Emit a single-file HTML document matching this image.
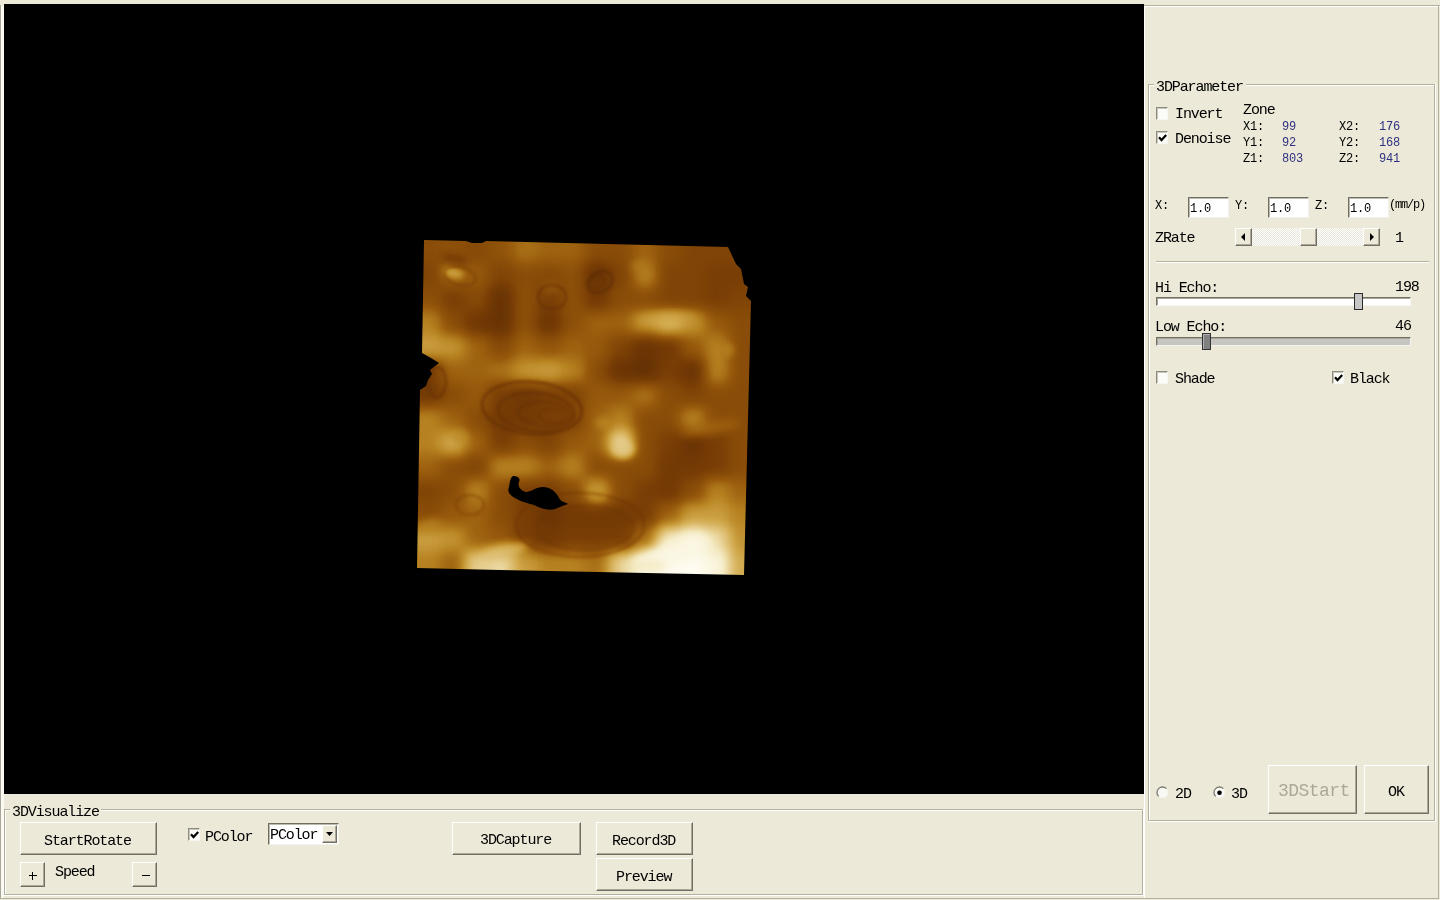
<!DOCTYPE html>
<html><head><meta charset="utf-8">
<style>
html,body{margin:0;padding:0;width:1440px;height:900px;overflow:hidden;background:#ece9d8;}
*{box-sizing:border-box;}
.a{position:absolute;}
.t{position:absolute;font-family:"Liberation Mono",monospace;font-size:15px;line-height:15px;letter-spacing:-1.1px;color:#000;white-space:pre;will-change:transform;}
.s{position:absolute;font-family:"Liberation Mono",monospace;font-size:12px;line-height:12px;letter-spacing:-0.2px;color:#000;white-space:pre;will-change:transform;}
.blue{color:#2e3080;}
.hl{position:absolute;height:1px;background:#b3b09c;}
.hw{position:absolute;height:1px;background:#fff;}
.vl{position:absolute;width:1px;background:#b3b09c;}
.vw{position:absolute;width:1px;background:#fff;}
.btn{position:absolute;background:#ece9d8;border-top:1px solid #fff;border-left:1px solid #fff;border-right:1px solid #716f64;border-bottom:1px solid #716f64;box-shadow:inset -1px -1px 0 #aca899;}
.cb{position:absolute;width:12px;height:13px;background:#fbfbf8;border-top:1px solid #8d8b80;border-left:1px solid #8d8b80;border-right:1px solid #f6f5ef;border-bottom:1px solid #f6f5ef;box-shadow:inset 1px 1px 0 #c9c7bb;}
.edit{position:absolute;background:#fff;border-top:1px solid #6f6e60;border-left:1px solid #6f6e60;border-right:1px solid #f3f2ea;border-bottom:1px solid #f3f2ea;box-shadow:inset 1px 1px 0 #bdbbad;}
</style></head><body>
<!-- window frame -->
<div class="vl" style="left:0;top:5px;height:894px;background:#a9a797"></div>
<div class="a" style="left:1px;top:6px;width:3px;height:892px;background:#fafaf2"></div>
<!-- black viewport -->
<div class="a" style="left:4px;top:4px;width:1140px;height:790px;background:#000"></div>
<div id="us" class="a" style="left:0;top:0;width:1440px;height:900px;"><svg class="a" style="left:0;top:0" width="1440" height="900" viewBox="0 0 1440 900">
<defs><clipPath id="cp"><polygon points="424,240 466,241 472,243 482,243 486,241 728,247 736,264 741,269 744,284 748,287 746,296 751,301 744,575 500,570 417,568 420,390 426,386 428,380 432,374 430,370 439,363 431,358 422,353"/></clipPath>
<filter id="cm" x="0" y="0" width="1" height="1" color-interpolation-filters="sRGB"><feComponentTransfer><feFuncR type="table" tableValues="0.118 0.196 0.294 0.384 0.486 0.596 0.722 0.824 0.894 0.957 1.000"/><feFuncG type="table" tableValues="0.039 0.078 0.137 0.184 0.251 0.353 0.518 0.667 0.792 0.918 0.992"/><feFuncB type="table" tableValues="0.000 0.000 0.008 0.016 0.024 0.047 0.133 0.306 0.529 0.765 0.949"/></feComponentTransfer></filter>
<filter id="gb" x="-10%" y="-10%" width="120%" height="120%" color-interpolation-filters="sRGB"><feGaussianBlur stdDeviation="7"/></filter>
<filter id="f3" x="-50%" y="-50%" width="200%" height="200%" color-interpolation-filters="sRGB"><feGaussianBlur stdDeviation="3"/></filter>
<filter id="f4" x="-50%" y="-50%" width="200%" height="200%" color-interpolation-filters="sRGB"><feGaussianBlur stdDeviation="4"/></filter>
<filter id="f6" x="-50%" y="-50%" width="200%" height="200%" color-interpolation-filters="sRGB"><feGaussianBlur stdDeviation="6"/></filter>
<filter id="fr" x="-20%" y="-20%" width="140%" height="140%" color-interpolation-filters="sRGB"><feGaussianBlur stdDeviation="1.4"/></filter>
</defs>
<g clip-path="url(#cp)"><g filter="url(#cm)">
<rect x="400" y="225" width="370" height="370" fill="#737373"/>
<g filter="url(#gb)">
<rect x="393" y="215" width="25" height="25" fill="#737373"/>
<rect x="417" y="215" width="25" height="25" fill="#737373"/>
<rect x="441" y="215" width="25" height="25" fill="#767676"/>
<rect x="465" y="215" width="25" height="25" fill="#707070"/>
<rect x="489" y="215" width="25" height="25" fill="#7a7a7a"/>
<rect x="513" y="215" width="25" height="25" fill="#8d8d8d"/>
<rect x="537" y="215" width="25" height="25" fill="#858585"/>
<rect x="561" y="215" width="25" height="25" fill="#858585"/>
<rect x="585" y="215" width="25" height="25" fill="#737373"/>
<rect x="609" y="215" width="25" height="25" fill="#737373"/>
<rect x="633" y="215" width="25" height="25" fill="#858585"/>
<rect x="657" y="215" width="25" height="25" fill="#737373"/>
<rect x="681" y="215" width="25" height="25" fill="#6a6a6a"/>
<rect x="705" y="215" width="25" height="25" fill="#6a6a6a"/>
<rect x="729" y="215" width="25" height="25" fill="#6a6a6a"/>
<rect x="753" y="215" width="25" height="25" fill="#6a6a6a"/>
<rect x="393" y="239" width="25" height="25" fill="#737373"/>
<rect x="417" y="239" width="25" height="25" fill="#737373"/>
<rect x="441" y="239" width="25" height="25" fill="#767676"/>
<rect x="465" y="239" width="25" height="25" fill="#707070"/>
<rect x="489" y="239" width="25" height="25" fill="#7a7a7a"/>
<rect x="513" y="239" width="25" height="25" fill="#8d8d8d"/>
<rect x="537" y="239" width="25" height="25" fill="#858585"/>
<rect x="561" y="239" width="25" height="25" fill="#858585"/>
<rect x="585" y="239" width="25" height="25" fill="#737373"/>
<rect x="609" y="239" width="25" height="25" fill="#737373"/>
<rect x="633" y="239" width="25" height="25" fill="#858585"/>
<rect x="657" y="239" width="25" height="25" fill="#737373"/>
<rect x="681" y="239" width="25" height="25" fill="#6a6a6a"/>
<rect x="705" y="239" width="25" height="25" fill="#6a6a6a"/>
<rect x="729" y="239" width="25" height="25" fill="#6a6a6a"/>
<rect x="753" y="239" width="25" height="25" fill="#6a6a6a"/>
<rect x="393" y="263" width="25" height="25" fill="#6a6a6a"/>
<rect x="417" y="263" width="25" height="25" fill="#6a6a6a"/>
<rect x="441" y="263" width="25" height="25" fill="#858585"/>
<rect x="465" y="263" width="25" height="25" fill="#7e7e7e"/>
<rect x="489" y="263" width="25" height="25" fill="#6a6a6a"/>
<rect x="513" y="263" width="25" height="25" fill="#737373"/>
<rect x="537" y="263" width="25" height="25" fill="#707070"/>
<rect x="561" y="263" width="25" height="25" fill="#767676"/>
<rect x="585" y="263" width="25" height="25" fill="#555555"/>
<rect x="609" y="263" width="25" height="25" fill="#6a6a6a"/>
<rect x="633" y="263" width="25" height="25" fill="#989898"/>
<rect x="657" y="263" width="25" height="25" fill="#6a6a6a"/>
<rect x="681" y="263" width="25" height="25" fill="#6a6a6a"/>
<rect x="705" y="263" width="25" height="25" fill="#646464"/>
<rect x="729" y="263" width="25" height="25" fill="#646464"/>
<rect x="753" y="263" width="25" height="25" fill="#646464"/>
<rect x="393" y="287" width="25" height="25" fill="#767676"/>
<rect x="417" y="287" width="25" height="25" fill="#767676"/>
<rect x="441" y="287" width="25" height="25" fill="#646464"/>
<rect x="465" y="287" width="25" height="25" fill="#707070"/>
<rect x="489" y="287" width="25" height="25" fill="#525252"/>
<rect x="513" y="287" width="25" height="25" fill="#767676"/>
<rect x="537" y="287" width="25" height="25" fill="#646464"/>
<rect x="561" y="287" width="25" height="25" fill="#767676"/>
<rect x="585" y="287" width="25" height="25" fill="#5e5e5e"/>
<rect x="609" y="287" width="25" height="25" fill="#737373"/>
<rect x="633" y="287" width="25" height="25" fill="#737373"/>
<rect x="657" y="287" width="25" height="25" fill="#6a6a6a"/>
<rect x="681" y="287" width="25" height="25" fill="#6a6a6a"/>
<rect x="705" y="287" width="25" height="25" fill="#646464"/>
<rect x="729" y="287" width="25" height="25" fill="#6a6a6a"/>
<rect x="753" y="287" width="25" height="25" fill="#6a6a6a"/>
<rect x="393" y="311" width="25" height="25" fill="#989898"/>
<rect x="417" y="311" width="25" height="25" fill="#989898"/>
<rect x="441" y="311" width="25" height="25" fill="#737373"/>
<rect x="465" y="311" width="25" height="25" fill="#5b5b5b"/>
<rect x="489" y="311" width="25" height="25" fill="#525252"/>
<rect x="513" y="311" width="25" height="25" fill="#767676"/>
<rect x="537" y="311" width="25" height="25" fill="#585858"/>
<rect x="561" y="311" width="25" height="25" fill="#767676"/>
<rect x="585" y="311" width="25" height="25" fill="#858585"/>
<rect x="609" y="311" width="25" height="25" fill="#858585"/>
<rect x="633" y="311" width="25" height="25" fill="#a3a3a3"/>
<rect x="657" y="311" width="25" height="25" fill="#bdbdbd"/>
<rect x="681" y="311" width="25" height="25" fill="#a3a3a3"/>
<rect x="705" y="311" width="25" height="25" fill="#7e7e7e"/>
<rect x="729" y="311" width="25" height="25" fill="#737373"/>
<rect x="753" y="311" width="25" height="25" fill="#737373"/>
<rect x="393" y="335" width="25" height="25" fill="#aaaaaa"/>
<rect x="417" y="335" width="25" height="25" fill="#aaaaaa"/>
<rect x="441" y="335" width="25" height="25" fill="#a3a3a3"/>
<rect x="465" y="335" width="25" height="25" fill="#858585"/>
<rect x="489" y="335" width="25" height="25" fill="#707070"/>
<rect x="513" y="335" width="25" height="25" fill="#858585"/>
<rect x="537" y="335" width="25" height="25" fill="#7a7a7a"/>
<rect x="561" y="335" width="25" height="25" fill="#858585"/>
<rect x="585" y="335" width="25" height="25" fill="#7e7e7e"/>
<rect x="609" y="335" width="25" height="25" fill="#6a6a6a"/>
<rect x="633" y="335" width="25" height="25" fill="#555555"/>
<rect x="657" y="335" width="25" height="25" fill="#5e5e5e"/>
<rect x="681" y="335" width="25" height="25" fill="#7e7e7e"/>
<rect x="705" y="335" width="25" height="25" fill="#989898"/>
<rect x="729" y="335" width="25" height="25" fill="#737373"/>
<rect x="753" y="335" width="25" height="25" fill="#737373"/>
<rect x="393" y="359" width="25" height="25" fill="#646464"/>
<rect x="417" y="359" width="25" height="25" fill="#646464"/>
<rect x="441" y="359" width="25" height="25" fill="#858585"/>
<rect x="465" y="359" width="25" height="25" fill="#858585"/>
<rect x="489" y="359" width="25" height="25" fill="#8d8d8d"/>
<rect x="513" y="359" width="25" height="25" fill="#a3a3a3"/>
<rect x="537" y="359" width="25" height="25" fill="#aaaaaa"/>
<rect x="561" y="359" width="25" height="25" fill="#989898"/>
<rect x="585" y="359" width="25" height="25" fill="#737373"/>
<rect x="609" y="359" width="25" height="25" fill="#555555"/>
<rect x="633" y="359" width="25" height="25" fill="#505050"/>
<rect x="657" y="359" width="25" height="25" fill="#646464"/>
<rect x="681" y="359" width="25" height="25" fill="#555555"/>
<rect x="705" y="359" width="25" height="25" fill="#989898"/>
<rect x="729" y="359" width="25" height="25" fill="#737373"/>
<rect x="753" y="359" width="25" height="25" fill="#737373"/>
<rect x="393" y="383" width="25" height="25" fill="#5e5e5e"/>
<rect x="417" y="383" width="25" height="25" fill="#5e5e5e"/>
<rect x="441" y="383" width="25" height="25" fill="#737373"/>
<rect x="465" y="383" width="25" height="25" fill="#7e7e7e"/>
<rect x="489" y="383" width="25" height="25" fill="#646464"/>
<rect x="513" y="383" width="25" height="25" fill="#5b5b5b"/>
<rect x="537" y="383" width="25" height="25" fill="#646464"/>
<rect x="561" y="383" width="25" height="25" fill="#6a6a6a"/>
<rect x="585" y="383" width="25" height="25" fill="#7e7e7e"/>
<rect x="609" y="383" width="25" height="25" fill="#7e7e7e"/>
<rect x="633" y="383" width="25" height="25" fill="#8d8d8d"/>
<rect x="657" y="383" width="25" height="25" fill="#737373"/>
<rect x="681" y="383" width="25" height="25" fill="#6a6a6a"/>
<rect x="705" y="383" width="25" height="25" fill="#737373"/>
<rect x="729" y="383" width="25" height="25" fill="#737373"/>
<rect x="753" y="383" width="25" height="25" fill="#737373"/>
<rect x="393" y="407" width="25" height="25" fill="#989898"/>
<rect x="417" y="407" width="25" height="25" fill="#989898"/>
<rect x="441" y="407" width="25" height="25" fill="#858585"/>
<rect x="465" y="407" width="25" height="25" fill="#737373"/>
<rect x="489" y="407" width="25" height="25" fill="#5e5e5e"/>
<rect x="513" y="407" width="25" height="25" fill="#5e5e5e"/>
<rect x="537" y="407" width="25" height="25" fill="#646464"/>
<rect x="561" y="407" width="25" height="25" fill="#6a6a6a"/>
<rect x="585" y="407" width="25" height="25" fill="#858585"/>
<rect x="609" y="407" width="25" height="25" fill="#989898"/>
<rect x="633" y="407" width="25" height="25" fill="#737373"/>
<rect x="657" y="407" width="25" height="25" fill="#737373"/>
<rect x="681" y="407" width="25" height="25" fill="#989898"/>
<rect x="705" y="407" width="25" height="25" fill="#737373"/>
<rect x="729" y="407" width="25" height="25" fill="#737373"/>
<rect x="753" y="407" width="25" height="25" fill="#737373"/>
<rect x="393" y="431" width="25" height="25" fill="#989898"/>
<rect x="417" y="431" width="25" height="25" fill="#989898"/>
<rect x="441" y="431" width="25" height="25" fill="#b2b2b2"/>
<rect x="465" y="431" width="25" height="25" fill="#858585"/>
<rect x="489" y="431" width="25" height="25" fill="#646464"/>
<rect x="513" y="431" width="25" height="25" fill="#737373"/>
<rect x="537" y="431" width="25" height="25" fill="#6a6a6a"/>
<rect x="561" y="431" width="25" height="25" fill="#7e7e7e"/>
<rect x="585" y="431" width="25" height="25" fill="#858585"/>
<rect x="609" y="431" width="25" height="25" fill="#d7d7d7"/>
<rect x="633" y="431" width="25" height="25" fill="#737373"/>
<rect x="657" y="431" width="25" height="25" fill="#646464"/>
<rect x="681" y="431" width="25" height="25" fill="#555555"/>
<rect x="705" y="431" width="25" height="25" fill="#646464"/>
<rect x="729" y="431" width="25" height="25" fill="#737373"/>
<rect x="753" y="431" width="25" height="25" fill="#737373"/>
<rect x="393" y="455" width="25" height="25" fill="#858585"/>
<rect x="417" y="455" width="25" height="25" fill="#858585"/>
<rect x="441" y="455" width="25" height="25" fill="#737373"/>
<rect x="465" y="455" width="25" height="25" fill="#6a6a6a"/>
<rect x="489" y="455" width="25" height="25" fill="#989898"/>
<rect x="513" y="455" width="25" height="25" fill="#989898"/>
<rect x="537" y="455" width="25" height="25" fill="#858585"/>
<rect x="561" y="455" width="25" height="25" fill="#989898"/>
<rect x="585" y="455" width="25" height="25" fill="#737373"/>
<rect x="609" y="455" width="25" height="25" fill="#737373"/>
<rect x="633" y="455" width="25" height="25" fill="#737373"/>
<rect x="657" y="455" width="25" height="25" fill="#5e5e5e"/>
<rect x="681" y="455" width="25" height="25" fill="#5e5e5e"/>
<rect x="705" y="455" width="25" height="25" fill="#646464"/>
<rect x="729" y="455" width="25" height="25" fill="#737373"/>
<rect x="753" y="455" width="25" height="25" fill="#737373"/>
<rect x="393" y="479" width="25" height="25" fill="#6a6a6a"/>
<rect x="417" y="479" width="25" height="25" fill="#6a6a6a"/>
<rect x="441" y="479" width="25" height="25" fill="#737373"/>
<rect x="465" y="479" width="25" height="25" fill="#989898"/>
<rect x="489" y="479" width="25" height="25" fill="#737373"/>
<rect x="513" y="479" width="25" height="25" fill="#646464"/>
<rect x="537" y="479" width="25" height="25" fill="#646464"/>
<rect x="561" y="479" width="25" height="25" fill="#737373"/>
<rect x="585" y="479" width="25" height="25" fill="#aaaaaa"/>
<rect x="609" y="479" width="25" height="25" fill="#737373"/>
<rect x="633" y="479" width="25" height="25" fill="#646464"/>
<rect x="657" y="479" width="25" height="25" fill="#5e5e5e"/>
<rect x="681" y="479" width="25" height="25" fill="#737373"/>
<rect x="705" y="479" width="25" height="25" fill="#989898"/>
<rect x="729" y="479" width="25" height="25" fill="#858585"/>
<rect x="753" y="479" width="25" height="25" fill="#858585"/>
<rect x="393" y="503" width="25" height="25" fill="#737373"/>
<rect x="417" y="503" width="25" height="25" fill="#737373"/>
<rect x="441" y="503" width="25" height="25" fill="#7e7e7e"/>
<rect x="465" y="503" width="25" height="25" fill="#858585"/>
<rect x="489" y="503" width="25" height="25" fill="#737373"/>
<rect x="513" y="503" width="25" height="25" fill="#646464"/>
<rect x="537" y="503" width="25" height="25" fill="#555555"/>
<rect x="561" y="503" width="25" height="25" fill="#5e5e5e"/>
<rect x="585" y="503" width="25" height="25" fill="#5e5e5e"/>
<rect x="609" y="503" width="25" height="25" fill="#5e5e5e"/>
<rect x="633" y="503" width="25" height="25" fill="#646464"/>
<rect x="657" y="503" width="25" height="25" fill="#858585"/>
<rect x="681" y="503" width="25" height="25" fill="#aaaaaa"/>
<rect x="705" y="503" width="25" height="25" fill="#aaaaaa"/>
<rect x="729" y="503" width="25" height="25" fill="#989898"/>
<rect x="753" y="503" width="25" height="25" fill="#989898"/>
<rect x="393" y="527" width="25" height="25" fill="#aaaaaa"/>
<rect x="417" y="527" width="25" height="25" fill="#aaaaaa"/>
<rect x="441" y="527" width="25" height="25" fill="#a3a3a3"/>
<rect x="465" y="527" width="25" height="25" fill="#858585"/>
<rect x="489" y="527" width="25" height="25" fill="#7e7e7e"/>
<rect x="513" y="527" width="25" height="25" fill="#646464"/>
<rect x="537" y="527" width="25" height="25" fill="#5e5e5e"/>
<rect x="561" y="527" width="25" height="25" fill="#646464"/>
<rect x="585" y="527" width="25" height="25" fill="#646464"/>
<rect x="609" y="527" width="25" height="25" fill="#646464"/>
<rect x="633" y="527" width="25" height="25" fill="#8d8d8d"/>
<rect x="657" y="527" width="25" height="25" fill="#e2e2e2"/>
<rect x="681" y="527" width="25" height="25" fill="#f4f4f4"/>
<rect x="705" y="527" width="25" height="25" fill="#d7d7d7"/>
<rect x="729" y="527" width="25" height="25" fill="#a3a3a3"/>
<rect x="753" y="527" width="25" height="25" fill="#a3a3a3"/>
<rect x="393" y="551" width="25" height="25" fill="#989898"/>
<rect x="417" y="551" width="25" height="25" fill="#989898"/>
<rect x="441" y="551" width="25" height="25" fill="#858585"/>
<rect x="465" y="551" width="25" height="25" fill="#cfcfcf"/>
<rect x="489" y="551" width="25" height="25" fill="#d7d7d7"/>
<rect x="513" y="551" width="25" height="25" fill="#aaaaaa"/>
<rect x="537" y="551" width="25" height="25" fill="#989898"/>
<rect x="561" y="551" width="25" height="25" fill="#989898"/>
<rect x="585" y="551" width="25" height="25" fill="#8d8d8d"/>
<rect x="609" y="551" width="25" height="25" fill="#cfcfcf"/>
<rect x="633" y="551" width="25" height="25" fill="#ffffff"/>
<rect x="657" y="551" width="25" height="25" fill="#ffffff"/>
<rect x="681" y="551" width="25" height="25" fill="#ffffff"/>
<rect x="705" y="551" width="25" height="25" fill="#f4f4f4"/>
<rect x="729" y="551" width="25" height="25" fill="#b2b2b2"/>
<rect x="753" y="551" width="25" height="25" fill="#b2b2b2"/>
<rect x="393" y="575" width="25" height="25" fill="#989898"/>
<rect x="417" y="575" width="25" height="25" fill="#989898"/>
<rect x="441" y="575" width="25" height="25" fill="#858585"/>
<rect x="465" y="575" width="25" height="25" fill="#cfcfcf"/>
<rect x="489" y="575" width="25" height="25" fill="#d7d7d7"/>
<rect x="513" y="575" width="25" height="25" fill="#aaaaaa"/>
<rect x="537" y="575" width="25" height="25" fill="#989898"/>
<rect x="561" y="575" width="25" height="25" fill="#989898"/>
<rect x="585" y="575" width="25" height="25" fill="#8d8d8d"/>
<rect x="609" y="575" width="25" height="25" fill="#cfcfcf"/>
<rect x="633" y="575" width="25" height="25" fill="#ffffff"/>
<rect x="657" y="575" width="25" height="25" fill="#ffffff"/>
<rect x="681" y="575" width="25" height="25" fill="#ffffff"/>
<rect x="705" y="575" width="25" height="25" fill="#f4f4f4"/>
<rect x="729" y="575" width="25" height="25" fill="#b2b2b2"/>
<rect x="753" y="575" width="25" height="25" fill="#b2b2b2"/>
</g>
<ellipse cx="453" cy="273" rx="11" ry="5" fill="#b8b8b8" opacity="0.80" filter="url(#f3)" transform="rotate(12 453 273)"/>
<ellipse cx="638" cy="266" rx="8" ry="6" fill="#949494" opacity="0.60" filter="url(#f3)"/>
<ellipse cx="667" cy="318" rx="30" ry="5" fill="#b2b2b2" opacity="0.70" filter="url(#f4)" transform="rotate(-3 667 318)"/>
<ellipse cx="728" cy="350" rx="7" ry="7" fill="#999999" opacity="0.70" filter="url(#f3)"/>
<ellipse cx="623" cy="449" rx="11" ry="9" fill="#cccccc" opacity="0.85" filter="url(#f3)"/>
<ellipse cx="603" cy="423" rx="8" ry="6" fill="#9e9e9e" opacity="0.70" filter="url(#f3)"/>
<ellipse cx="598" cy="495" rx="9" ry="6" fill="#9e9e9e" opacity="0.70" filter="url(#f3)"/>
<ellipse cx="505" cy="551" rx="24" ry="7" fill="#c7c7c7" opacity="0.80" filter="url(#f4)" transform="rotate(-12 505 551)"/>
<ellipse cx="676" cy="553" rx="38" ry="12" fill="#f7f7f7" opacity="0.90" filter="url(#f6)" transform="rotate(-18 676 553)"/>
<ellipse cx="645" cy="566" rx="22" ry="6" fill="#e0e0e0" opacity="0.80" filter="url(#f4)"/>
<ellipse cx="430" cy="525" rx="14" ry="6" fill="#9e9e9e" opacity="0.70" filter="url(#f4)" transform="rotate(-10 430 525)"/>
<ellipse cx="460" cy="437" rx="9" ry="6" fill="#9e9e9e" opacity="0.70" filter="url(#f3)"/>
<ellipse cx="710" cy="428" rx="30" ry="6" fill="#949494" opacity="0.60" filter="url(#f4)" transform="rotate(-10 710 428)"/>
<ellipse cx="455" cy="259" rx="14" ry="5" fill="#4c4c4c" opacity="0.50" filter="url(#f3)" transform="rotate(12 455 259)"/>
<ellipse cx="551" cy="287" rx="9" ry="7" fill="#858585" opacity="0.50" filter="url(#f3)"/>
<g filter="url(#fr)" fill="none">
<ellipse cx="600" cy="282" rx="13" ry="10" transform="rotate(-30 600 282)" stroke="#404040" stroke-width="2.0" opacity="0.70"/>
<ellipse cx="598" cy="282" rx="8" ry="6" transform="rotate(-30 598 282)" stroke="#474747" stroke-width="1.5" opacity="0.50"/>
<ellipse cx="552" cy="297" rx="14" ry="12" transform="rotate(0 552 297)" stroke="#474747" stroke-width="1.8" opacity="0.55"/>
<ellipse cx="532" cy="408" rx="50" ry="26" transform="rotate(5 532 408)" stroke="#424242" stroke-width="2.0" opacity="0.60"/>
<ellipse cx="536" cy="412" rx="38" ry="19" transform="rotate(5 536 412)" stroke="#424242" stroke-width="1.8" opacity="0.55"/>
<ellipse cx="544" cy="414" rx="26" ry="12" transform="rotate(5 544 414)" stroke="#474747" stroke-width="1.6" opacity="0.55"/>
<ellipse cx="552" cy="416" rx="13" ry="7" transform="rotate(5 552 416)" stroke="#4c4c4c" stroke-width="1.5" opacity="0.50"/>
<ellipse cx="437" cy="382" rx="9" ry="15" transform="rotate(0 437 382)" stroke="#424242" stroke-width="1.8" opacity="0.55"/>
<ellipse cx="580" cy="525" rx="64" ry="32" transform="rotate(0 580 525)" stroke="#4c4c4c" stroke-width="1.6" opacity="0.45"/>
<ellipse cx="585" cy="528" rx="48" ry="22" transform="rotate(0 585 528)" stroke="#4c4c4c" stroke-width="1.4" opacity="0.40"/>
<ellipse cx="460" cy="276" rx="16" ry="9" transform="rotate(15 460 276)" stroke="#4c4c4c" stroke-width="1.6" opacity="0.45"/>
<ellipse cx="470" cy="505" rx="14" ry="10" transform="rotate(0 470 505)" stroke="#4c4c4c" stroke-width="1.4" opacity="0.40"/>
</g>
</g></g>
<path d="M513,476 C517,476 521,478 519,482 C517,486 521,491 526,492 C531,492 536,487 543,487 C551,487 556,492 559,498 C561,502 565,502 568,504 C563,506 559,507 555,509 C548,511 540,508 534,505 C528,503 521,502 515,498 C510,495 507,492 509,487 C510,482 510,478 513,476 Z" fill="#000"/>
</svg></div>

<!-- right panel frame -->
<div class="hl" style="left:1144px;top:5px;width:1295px"></div>
<div class="hw" style="left:1145px;top:6px;width:1293px"></div>
<div class="vl" style="left:1438px;top:5px;height:894px"></div>
<div class="hl" style="left:1144px;top:898px;width:295px"></div>
<div class="vw" style="left:1144px;top:6px;height:892px"></div>

<!-- 3DParameter group -->
<div class="hl" style="left:1148px;top:84px;width:287px"></div>
<div class="hw" style="left:1149px;top:85px;width:285px"></div>
<div class="vl" style="left:1148px;top:84px;height:737px"></div>
<div class="vw" style="left:1149px;top:85px;height:735px"></div>
<div class="vl" style="left:1434px;top:84px;height:737px"></div>
<div class="vw" style="left:1435px;top:84px;height:738px"></div>
<div class="hl" style="left:1148px;top:820px;width:287px"></div>
<div class="hw" style="left:1148px;top:821px;width:288px"></div>
<div class="a" style="left:1154px;top:78px;width:92px;height:14px;background:#ece9d8"></div>
<div class="t" style="left:1156px;top:80px">3DParameter</div>


<!-- Invert / Denoise -->
<div class="cb" style="left:1156px;top:107px"></div>
<div class="t" style="left:1175px;top:107px">Invert</div>
<div class="cb" style="left:1156px;top:131px"><svg width="11" height="11" style="position:absolute;left:0;top:0"><path d="M2 5.2 L4.5 8 L9.2 3" stroke="#000" stroke-width="2.2" fill="none"/></svg></div>
<div class="t" style="left:1175px;top:132px">Denoise</div>
<div class="t" style="left:1243px;top:103px">Zone</div>
<div class="s" style="left:1243px;top:121px">X1:</div>
<div class="s" style="left:1243px;top:137px">Y1:</div>
<div class="s" style="left:1243px;top:153px">Z1:</div>
<div class="s blue" style="left:1282px;top:121px">99</div>
<div class="s blue" style="left:1282px;top:137px">92</div>
<div class="s blue" style="left:1282px;top:153px">803</div>
<div class="s" style="left:1339px;top:121px">X2:</div>
<div class="s" style="left:1339px;top:137px">Y2:</div>
<div class="s" style="left:1339px;top:153px">Z2:</div>
<div class="s blue" style="left:1379px;top:121px">176</div>
<div class="s blue" style="left:1379px;top:137px">168</div>
<div class="s blue" style="left:1379px;top:153px">941</div>

<!-- X Y Z edits -->
<div class="s" style="left:1155px;top:200px">X:</div>
<div class="edit" style="left:1188px;top:197px;width:41px;height:21px"></div>
<div class="s" style="left:1190px;top:203px">1.0</div>
<div class="s" style="left:1235px;top:200px">Y:</div>
<div class="edit" style="left:1268px;top:197px;width:41px;height:21px"></div>
<div class="s" style="left:1270px;top:203px">1.0</div>
<div class="s" style="left:1315px;top:200px">Z:</div>
<div class="edit" style="left:1348px;top:197px;width:41px;height:21px"></div>
<div class="s" style="left:1350px;top:203px">1.0</div>
<div class="s" style="left:1389px;top:199px;letter-spacing:-1.2px">(mm/p)</div>

<!-- ZRate scrollbar -->
<div class="t" style="left:1155px;top:231px">ZRate</div>
<div class="a" style="left:1235px;top:228px;width:145px;height:18px;background-color:#f4f3ee;background-image:repeating-conic-gradient(#fdfdfb 0 25%, #e9e7dc 0 50%);background-size:2px 2px;"></div>
<div class="btn" style="left:1235px;top:228px;width:17px;height:18px"><svg width="15" height="16" style="position:absolute;left:0;top:0"><path d="M5 8 L9 4 L9 12 Z" fill="#000"/></svg></div>
<div class="btn" style="left:1300px;top:228px;width:17px;height:18px"></div>
<div class="btn" style="left:1363px;top:228px;width:17px;height:18px"><svg width="15" height="16" style="position:absolute;left:0;top:0"><path d="M10 8 L6 4 L6 12 Z" fill="#000"/></svg></div>
<div class="t" style="left:1395px;top:231px">1</div>

<div class="hl" style="left:1156px;top:261px;width:273px"></div>
<div class="hw" style="left:1156px;top:262px;width:273px"></div>

<!-- Hi Echo -->
<div class="t" style="left:1155px;top:281px">Hi Echo:</div>
<div class="t" style="left:1395px;top:280px">198</div>
<div class="a" style="left:1156px;top:297px;width:255px;height:9px;background:#fff;border-top:1px solid #727164;border-left:1px solid #727164;border-bottom:1px solid #f6f5ee;border-right:1px solid #f6f5ee;box-shadow:inset 1px 1px 0 #a8a698;"></div>
<div class="a" style="left:1354px;top:293px;width:9px;height:17px;background:#c6c6c6;border:1px solid #2a2a2a;"></div>

<!-- Low Echo -->
<div class="t" style="left:1155px;top:320px">Low Echo:</div>
<div class="t" style="left:1395px;top:319px">46</div>
<div class="a" style="left:1156px;top:337px;width:255px;height:9px;background:#c6c5c2;border-top:1px solid #727164;border-left:1px solid #727164;border-bottom:1px solid #f6f5ee;border-right:1px solid #f6f5ee;box-shadow:inset 1px 1px 0 #a8a698;"></div>
<div class="a" style="left:1202px;top:333px;width:9px;height:17px;background:#808080;border:1px solid #303030;box-shadow:inset 1px 1px 0 #b0b0b0;"></div>

<!-- Shade / Black -->
<div class="cb" style="left:1156px;top:371px"></div>
<div class="t" style="left:1175px;top:372px">Shade</div>
<div class="cb" style="left:1332px;top:371px"><svg width="11" height="11" style="position:absolute;left:0;top:0"><path d="M2 5.2 L4.5 8 L9.2 3" stroke="#000" stroke-width="2.2" fill="none"/></svg></div>
<div class="t" style="left:1350px;top:372px">Black</div>

<!-- radios -->
<svg class="a" style="left:1156px;top:786px" width="14" height="14"><circle cx="6.5" cy="6.5" r="5.5" fill="#f8f8f4"/><path d="M2.6 10.4 A5.5 5.5 0 0 1 10.4 2.6" stroke="#7c7b70" stroke-width="1.3" fill="none"/></svg>
<div class="t" style="left:1175px;top:787px">2D</div>
<svg class="a" style="left:1213px;top:786px" width="14" height="14"><circle cx="6.5" cy="6.5" r="5.5" fill="#f8f8f4"/><path d="M2.6 10.4 A5.5 5.5 0 0 1 10.4 2.6" stroke="#7c7b70" stroke-width="1.3" fill="none"/><circle cx="6.5" cy="6.8" r="2.3" fill="#000"/></svg>
<div class="t" style="left:1231px;top:787px">3D</div>

<div class="btn" style="left:1268px;top:765px;width:89px;height:49px"></div>
<div class="t" style="left:1278px;top:782px;color:#aca899;font-size:18px;line-height:18px;letter-spacing:-0.55px">3DStart</div>
<div class="btn" style="left:1364px;top:765px;width:65px;height:49px"></div>
<div class="t" style="left:1388px;top:785px">OK</div>

<!-- bottom group 3DVisualize -->
<div class="hl" style="left:0px;top:898px;width:1144px"></div>
<div class="hl" style="left:4px;top:809px;width:1139px"></div>
<div class="hw" style="left:5px;top:810px;width:1137px"></div>
<div class="vl" style="left:4px;top:809px;height:86px"></div>
<div class="vw" style="left:5px;top:810px;height:84px"></div>
<div class="vl" style="left:1142px;top:809px;height:86px"></div>
<div class="vw" style="left:1143px;top:809px;height:87px"></div>
<div class="hl" style="left:4px;top:894px;width:1139px"></div>
<div class="hw" style="left:4px;top:895px;width:1140px"></div>
<div class="a" style="left:10px;top:802px;width:91px;height:14px;background:#ece9d8"></div>
<div class="t" style="left:12px;top:805px">3DVisualize</div>

<div class="btn" style="left:20px;top:822px;width:137px;height:33px"></div>
<div class="t" style="left:44px;top:834px">StartRotate</div>
<div class="btn" style="left:20px;top:862px;width:25px;height:25px"></div>
<div class="a" style="left:29px;top:875px;width:8px;height:1px;background:#000"></div><div class="a" style="left:32px;top:872px;width:1px;height:8px;background:#000"></div>
<div class="t" style="left:55px;top:865px">Speed</div>
<div class="btn" style="left:132px;top:862px;width:25px;height:25px"></div>
<div class="a" style="left:142px;top:875px;width:8px;height:1px;background:#000"></div>

<div class="cb" style="left:188px;top:828px"><svg width="11" height="11" style="position:absolute;left:0;top:0"><path d="M2 5.2 L4.5 8 L9.2 3" stroke="#000" stroke-width="2.2" fill="none"/></svg></div>
<div class="t" style="left:205px;top:830px">PColor</div>
<div class="edit" style="left:268px;top:823px;width:71px;height:22px"></div>
<div class="t" style="left:270px;top:828px">PColor</div>
<div class="btn" style="left:322px;top:825px;width:15px;height:18px"><svg width="13" height="16" style="position:absolute;left:0;top:0"><path d="M3 6 L10 6 L6.5 10 Z" fill="#000"/></svg></div>

<div class="btn" style="left:452px;top:822px;width:129px;height:33px"></div>
<div class="t" style="left:480px;top:833px">3DCapture</div>
<div class="btn" style="left:596px;top:822px;width:97px;height:33px"></div>
<div class="t" style="left:612px;top:834px">Record3D</div>
<div class="btn" style="left:596px;top:858px;width:97px;height:33px"></div>
<div class="t" style="left:616px;top:870px">Preview</div>

</body></html>
